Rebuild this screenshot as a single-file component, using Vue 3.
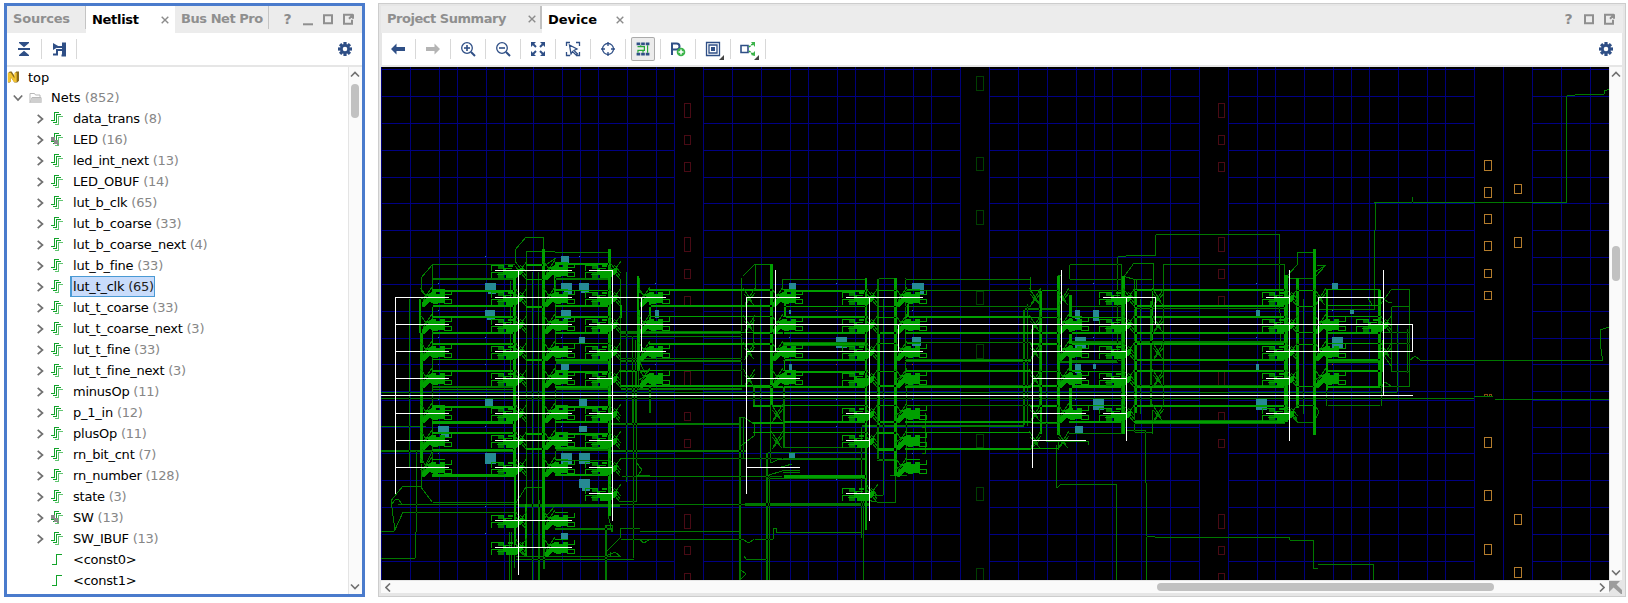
<script setup>
const nets = [
  ['data_trans', 8], ['LED', 16, 'port'], ['led_int_next', 13], ['LED_OBUF', 14], ['lut_b_clk', 65],
  ['lut_b_coarse', 33], ['lut_b_coarse_next', 4], ['lut_b_fine', 33], ['lut_t_clk', 65, 'sel'],
  ['lut_t_coarse', 33], ['lut_t_coarse_next', 3], ['lut_t_fine', 33], ['lut_t_fine_next', 3],
  ['minusOp', 11], ['p_1_in', 12], ['plusOp', 11], ['rn_bit_cnt', 7], ['rn_number', 128],
  ['state', 3], ['SW', 13, 'port'], ['SW_IBUF', 13], ['<const0>', 0, 'const'], ['<const1>', 0, 'const'],
]
const tools = ['back', 'forward', 'zoomin', 'zoomout', 'fit', 'select', 'target', 'routing', 'pblock', 'highlight', 'expand']

// straight segments: [x, y1, y2, width] and [y, x1, x2, width]
const vPath = l => l.map(([x, a, b, w = 1]) => `M${x},${a}h${w}V${b}h${-w}z`).join('')
const hPath = l => l.map(([y, a, b, w = 1]) => `M${a},${y}v${w}H${b}v${-w}z`).join('')
const boxes = l => l.map(([x, y, w, h]) => `M${x + 0.5},${y + 0.5}h${w}v${h}h${-w}z`).join('')

// clock-region tile grid
const gx = [381, 410, 439, 457, 486, 504, 533, 562, 580, 598, 627, 656, 674, 703, 732, 761, 790, 808, 837, 855, 884, 913, 931,
  960, 989, 1018, 1047, 1076, 1094, 1112, 1141, 1170, 1199, 1228, 1257, 1275, 1304, 1333, 1351, 1369, 1398, 1427, 1445, 1474, 1503, 1532, 1561, 1590]
const gy = [69, 96, 123, 150, 177, 203, 230, 257, 284, 311, 338, 364, 391, 400, 427, 453, 480, 507, 534, 561]
const spans = [[381, 674], [703, 960], [989, 1199], [1228, 1474], [1532, 1609]]
const gridV = vPath(gx.map(x => [x, 67, 580]))
const gridH = hPath(gy.flatMap(y => spans.map(([a, b]) => [y, a, b])))

const redRows = [[103, 14], [135, 9], [162, 9], [237, 14], [269, 9], [296, 9], [371, 14], [412, 8], [439, 8], [514, 14], [546, 8], [573, 9]]
const red = boxes([684, 1218].flatMap(x => redRows.map(([y, h]) => [x, y, 6, h])))
const dsp = boxes([[76, 14], [157, 13], [210, 14], [291, 13], [344, 14], [434, 13], [487, 13], [568, 13]].map(([y, h]) => [976, y, 7, h]))
const orange = boxes([
  ...[[160, 10], [187, 10], [214, 9], [241, 9], [269, 8], [291, 8], [437, 10], [490, 10], [544, 10]].map(([y, h]) => [1484, y, 7, h]),
  ...[[184, 9], [237, 10], [514, 10], [567, 10]].map(([y, h]) => [1514, y, 7, h]),
])
const teal = [
  [561, 256, 8, 8], [485, 283, 11, 8], [488, 290, 8, 4], [561, 283, 11, 7], [564, 290, 8, 4], [579, 283, 10, 7], [581, 290, 8, 3],
  [485, 310, 10, 7], [487, 317, 8, 3], [561, 310, 10, 7], [564, 317, 7, 2], [655, 310, 4, 8], [579, 337, 6, 6], [561, 364, 8, 6],
  [485, 399, 8, 7], [579, 399, 8, 7], [438, 426, 11, 7], [441, 433, 8, 4], [579, 426, 8, 6], [485, 453, 11, 11], [561, 453, 11, 11],
  [579, 453, 11, 11], [579, 479, 11, 9], [582, 488, 8, 3], [561, 533, 7, 6], [789, 283, 7, 6], [789, 310, 2, 4], [789, 364, 3, 6],
  [836, 337, 11, 11], [912, 283, 12, 8], [920, 291, 4, 3], [912, 337, 9, 9], [789, 453, 6, 5], [1075, 310, 5, 9], [1093, 310, 6, 11],
  [1075, 337, 11, 11], [1075, 364, 6, 9], [1093, 364, 3, 5], [1093, 399, 11, 11], [1075, 426, 8, 7], [1256, 310, 4, 6],
  [1256, 364, 3, 6], [1256, 399, 11, 11], [1332, 283, 6, 6], [1350, 310, 4, 4], [1332, 337, 11, 11],
]
const dots = [[485, 256], [579, 256], [438, 283], [655, 283], [438, 310], [438, 337], [485, 337], [561, 337], [438, 364], [485, 364],
  [655, 364], [438, 399], [485, 426], [561, 426], [438, 453], [485, 506], [561, 506], [485, 533], [836, 283], [912, 310], [789, 337],
  [836, 399], [912, 399], [836, 426], [912, 453], [836, 479], [1093, 283], [1093, 337], [1075, 399], [1256, 283], [1256, 337], [1332, 310]]
const hotDots = [[836, 310], [836, 364], [912, 364], [1332, 364]]

// slices: sites to the right (R) and to the left (L) of a switch column
const all = [270, 297, 324, 351, 378, 413, 440, 467]
const R = [[420, all.slice(1)], [543, [...all, 520, 547]], [638, [297, 324, 351, 378]], [771, [297, 324, 351, 378]],
  [895, [297, 324, 351, 378, 413, 440, 467]], [1057, [324, 351, 378, 413]], [1314, [324, 351, 378]]]
const L = [[515, [...all, 520, 547]], [609, [270, 297, 324, 351, 378, 413, 440, 467, 493]], [866, [297, 324, 351, 378, 413, 440, 493]],
  [1123, [297, 324, 351, 378, 413]], [1286, [297, 324, 351, 378, 413]], [1380, [324]]]
const fans = [[743, [297, 324, 351, 378]], [771, [413, 440]], [1029, [297, 324, 351, 378, 413, 440]], [1057, [297, 440]],
  [1152, [297, 324, 351, 378, 413]], [1314, [297]], [1380, [351]]]
const place = l => l.flatMap(([x, ys]) => ys.map(y => ({ x, y, t: `translate(${x} ${y})` })))
const rightSlices = place(R), leftSlices = place(L), loneFans = place(fans)

const darkV = [
  [409, 299, 468], [416, 451, 532], [415, 532, 558], [421, 277, 291], [432, 264, 290], [432, 313, 465], [526, 251, 270],
  [510, 281, 386], [526, 265, 557], [532, 272, 580], [538, 272, 557], [555, 276, 475], [509, 532, 580], [511, 532, 580], [514, 467, 568],
  [538, 500, 580, 2], [543, 467, 569, 2], [605, 525, 580, 2], [620, 279, 388], [626, 272, 482], [636, 370, 502], [632, 336, 424], [633, 390, 558],
  [635, 340, 424], [638, 276, 389], [649, 385, 413, 2], [741, 278, 385], [739, 417, 580, 2], [743, 417, 458], [755, 265, 290], [760, 299, 468],
  [753, 316, 350], [753, 386, 407, 2], [766, 452, 580, 2], [769, 474, 580], [770, 386, 463], [782, 279, 290], [783, 386, 447, 2],
  [861, 425, 538], [863, 498, 580], [877, 278, 460, 2], [883, 299, 496], [895, 459, 502], [905, 278, 386, 1], [906, 386, 467],
  [925, 413, 453], [1023, 308, 425, 2], [1027, 304, 426], [1039, 290, 406, 2], [1046, 325, 441], [1069, 264, 280], [1117, 256, 362],
  [1121, 264, 434], [1134, 279, 433], [1140, 299, 414], [1150, 301, 407, 2], [1163, 264, 406], [1145, 430, 483], [1146, 483, 580],
  [1056, 445, 488], [1116, 484, 580], [1155, 234, 256], [1279, 234, 313], [1280, 313, 341], [1284, 264, 277], [1303, 299, 414], [1313, 540, 568],
  [1373, 564, 580], [1375, 203, 230], [1374, 230, 309], [1397, 325, 393], [1407, 329, 373], [1409, 289, 387], [1391, 306, 372],
  [1326, 387, 406], [1381, 351, 406], [1566, 95, 203], [1412, 197, 203], [1289, 537, 541],
]
const brightV = [
  [419, 299, 333, 2], [420, 333, 463, 3], [513, 274, 475, 3], [514, 465, 545, 2], [542, 249, 476, 3], [542, 467, 547, 3], [554, 270, 294], [608, 249, 516, 3],
  [637, 276, 310, 2], [637, 310, 372, 3], [649, 300, 320, 2], [770, 264, 407, 3], [865, 278, 530, 2], [878, 332, 425, 2], [894, 278, 476, 3],
  [907, 304, 318, 2], [784, 304, 318, 2], [784, 358, 372], [1057, 276, 435, 3], [1069, 295, 415, 3], [1040, 290, 434, 2], [1122, 276, 434, 3],
  [1135, 290, 413, 2], [1152, 290, 340], [1284, 275, 422, 4], [1296, 278, 408, 3], [1313, 249, 435, 3], [1326, 289, 390, 2],
  [1378, 290, 386, 3], [1382, 340, 372], [432, 305, 344], [525, 504, 556, 2], [620, 305, 318, 2],
]
const bus = (a, b, ys) => ys.map(([y, w = 1]) => [y, a, b, w])
const darkH = [
  ...bus(433, 515, [[264], [278, 2], [386, 2], [389]]), ...bus(555, 609, [[252], [278, 2], [361, 3], [386, 4], [448, 3], [460]]),
  [392, 381, 1398], [398, 381, 1474], [396, 1474, 1493], [399, 1495, 1609], [426, 381, 426], [450, 381, 516, 2], [502, 433, 516],
  [504, 398, 518], [512, 403, 516], [531, 381, 394], [558, 381, 415],
  ...bus(621, 742, [[331, 3], [336], [358], [360, 2], [370], [388, 2]]), ...bus(610, 739, [[423, 2]]), ...bus(610, 747, [[450, 2]]),
  ...bus(622, 782, [[458], [476]]), ...bus(610, 745, [[504]]), [501, 620, 637], [504, 518, 620, 3], [528, 555, 612, 2], [528, 620, 640], [531, 640, 739],
  [539, 621, 744], [556, 516, 620], [559, 516, 634], [559, 746, 767], [539, 755, 773], [532, 776, 861], [503, 745, 869, 3],
  ...bus(783, 866, [[279], [342, 4], [360], [386], [447], [458, 2]]), [452, 766, 866], [478, 768, 866], [425, 861, 1024, 2],
  ...bus(905, 1031, [[279], [290], [306], [342], [359, 3], [385, 3], [405]]), [278, 877, 896], [459, 877, 896, 2], [475, 890, 907], [502, 877, 896], [495, 873, 884],
  ...bus(1069, 1121, [[264], [279], [290], [306], [341, 2], [360], [433]]), [308, 1023, 1058, 2], [422, 1033, 1058, 2],
  [361, 1060, 1118, 2], [484, 1061, 1116], [256, 1117, 1126], [255, 1126, 1155], [234, 1155, 1279],
  ...bus(1134, 1152, [[279], [432]]), [263, 1134, 1152], [264, 1164, 1284], [430, 1127, 1145], [537, 1155, 1289], [536, 1146, 1155], [540, 1289, 1313], [568, 1313, 1318], [564, 1318, 1373],
  ...bus(1134, 1285, [[308], [341, 2], [359], [385, 3], [420, 4]]), [252, 1297, 1314], [278, 1290, 1314], [422, 1297, 1315],
  ...bus(1328, 1380, [[360, 3], [405]]), [309, 1318, 1375], [289, 1391, 1409], [306, 1391, 1409], [332, 1382, 1409], [343, 1382, 1410],
  [371, 1391, 1409], [386, 1382, 1409], [360, 1420, 1603], [202, 1374, 1566], [95, 1566, 1575], [94, 1575, 1604],
]
const brightH = [
  ...bus(432, 514, [[290, 2], [305, 2], [316, 2], [332, 2], [343, 2], [359], [370, 2], [406, 2], [421, 3], [432, 2], [449, 2], [474, 3]]),
  ...bus(526, 543, [[264, 2], [279], [306, 2], [359, 2], [433, 2], [448, 2]]),
  ...bus(555, 609, [[263, 2], [290], [305, 2], [316, 2], [332, 2], [343], [359, 2], [371, 2], [386, 2], [406, 2], [421, 2], [433, 2], [447, 2], [474, 2]]),
  ...bus(649, 772, [[289, 2], [305, 2], [316], [332], [343, 2]]), [385, 621, 772, 2], [371, 620, 649],
  ...bus(753, 783, [[332, 2], [386, 2], [405, 2], [422, 2], [432]]),
  ...bus(784, 866, [[290, 2], [306], [316, 2], [332, 2], [343, 2], [359, 2], [371, 2], [386, 2], [405], [421, 2], [432], [475, 3]]),
  ...bus(878, 896, [[290], [306], [317], [332, 2], [343], [371], [385, 2], [405], [421, 2], [432, 2], [448, 3]]),
  ...bus(905, 1031, [[316, 2], [332, 2], [360], [370, 2], [386, 2], [421, 2], [432], [448, 2]]),
  ...bus(1031, 1058, [[290], [317], [332, 2], [343, 2], [371], [385, 2], [405, 2], [422], [448]]),
  ...bus(1069, 1121, [[317], [332, 2], [343, 2], [371], [385, 3], [405], [421, 2]]),
  ...bus(1134, 1285, [[289, 2], [305, 2], [316, 2], [332, 2], [343, 2], [359, 2], [370, 2], [386, 2], [405, 2], [421, 2]]),
  ...bus(1297, 1314, [[290], [306], [332], [344], [386], [405]]),
  ...bus(1328, 1380, [[289], [305], [316], [332, 2], [343], [359, 2], [370, 2], [386, 2]]),
]
// routes with bends
const bends = [
  'M421,278L432,265', 'M421,291L428,298', 'M515,262V250L526,237H543V262', 'M526,251H549L555,252', 'M609,249V264',
  'M421,464V487M421,487L432,502M432,452L421,474M403,486H421',
  'M391.500,504V500L403,486M391.500,504L394.500,527V531L403,512M392,504L395,500L398,499L402,504',
  'M514,506L526,487H544M543,520L555,506', 'M514,547L525,556H544L555,547', 'M544,252V266L556,258',
  'M608,514L612,532V525H605M606,552L620,538V528M606,556L615,552L621,557M610,557V552',
  'M636,462L642,470L636,478V502M637,475H648L650,476H740M620,458H636M640,540L644,543L650,539',
  'M639,278V292L649,298M638,358L649,382', 'M743,276L755,264H771V278', 'M739,417L745,418L754,424M739,447L754,436V424',
  'M742,539L749,543L754,539M744,556L746,559M741,570L746,574L741,579M773,539V528H776V532',
  'M771,463L779,459H790M778,468L792,464M766,476L785,470H800M783,473L800,472', 'M868,488L877,496M866,500L877,502',
  'M1030,277V290L1040,304M1058,276L1061,275', 'M1123,278L1134,263H1153V290M1123,276L1136,280V290',
  'M1152,410V434M1058,440V450M1030,450L1040,440M1057,488L1061,484', 'M1286,277L1297,265V252H1315M1297,278H1290L1286,275',
  'M1315,277L1326,265M1317,265H1326L1315,272', 'M1315,405L1319,412L1315,420M1285,405L1298,422', 'M1380,305L1391,290M1380,297L1388,302H1392M1368,298L1372,305H1380',
  'M1380,350L1391,366V372M1380,388L1385,382L1391,386', 'M1409,361L1415,356L1420,360M1602.500,360L1600.500,345V330L1609,327', 'M1604.500,94V91L1609,89',
  'M925,413V427H922M925,427V453H922', 'M514,548L526,541M503,548L515,555', 'M1046,441H1088V445',
]
const clkV = vPath([[395, 297, 494], [518, 270, 575], [612, 270, 521], [641, 297, 351], [746, 297, 494], [775, 270, 351], [869, 297, 521],
  [898, 324, 351], [1032, 324, 468], [1061, 270, 351], [1126, 297, 441], [1155, 297, 324], [1289, 270, 441], [1318, 297, 351], [1383, 270, 395], [1412, 324, 351]])
const clkH = hPath([
  ...all.slice(1).map(y => [y, 395, 449]), ...[...all, 520, 547].map(y => [y, 495, 572]),
  ...[270, 378, 413, 440, 467, 493].map(y => [y, 589, 612]), [297, 589, 666], [351, 589, 666], [324, 589, 1413], [395, 381, 1413],
  [297, 746, 800], [351, 746, 923], [378, 746, 800], [467, 746, 800], [297, 846, 923], [413, 846, 869], [440, 846, 869], [493, 846, 869],
  [297, 1103, 1156], [351, 1032, 1127], [378, 1032, 1086], [378, 1103, 1127], [413, 1032, 1086], [413, 1103, 1127], [440, 1032, 1086],
  [297, 1266, 1290], [297, 1318, 1384], [351, 1266, 1413], [378, 1266, 1290], [413, 1266, 1290],
])
const darkPath = vPath(darkV) + hPath(darkH)
const brightPath = vPath(brightV) + hPath(brightH)
const bendPath = bends.join('')
</script>

<template>
  <div class="app">
    <section class="netlist">
      <header class="tabs">
        <div class="tab t-src">Sources</div>
        <div class="tab on t-net">Netlist<svg class="x" viewBox="0 0 8 8"><path d="M.7.7l6.6 6.6M7.3.7L.7 7.3" /></svg></div>
        <div class="tab t-bus">Bus Net Pro</div>
        <svg class="win" width="73" height="14" viewBox="0 0 73 14">
          <text x="0.500" y="11.3">?</text>
          <path d="M20 11.300h10" /><path d="M41 2.200h8v8h-8z" />
          <path d="M66 2h-5v9h8V7M66 6l3-3M66 2h4M70 1.500V6" transform="translate(0 -.3)" />
        </svg>
      </header>
      <div class="toolbar">
        <div class="cell"><svg width="14" height="16" viewBox="0 0 14 16"><path class="nf" d="M2 1h10v1L7 6.300L2 2zM2 15h10v-1L7 9.700L2 14z" /><path class="nf" d="M1 7h12v2H1z" /></svg></div>
        <div class="cell"><svg width="15" height="15" viewBox="0 0 15 15"><path class="nf" d="M1 1l6 3.500L1 8z" /><path class="n2" d="M5 5h5M10 1.500h3v12h-3.500M11 1v13M11 8H5v4.500H1" /></svg></div>
        <svg class="gear" width="16" height="16" viewBox="-8 -8 16 16"><g class="nf"><rect v-for="a in 4" :key="a" x="-1.6" y="-7" width="3.200" height="14" :transform="`rotate(${a * 45})`" /></g><circle class="gr" r="3.900" /></svg>
      </div>
      <div class="body">
        <div class="tree">
          <div class="row root"><svg class="nicon" width="12" height="14" viewBox="0 0 13 14"><path d="M1 13V3l2-2h2l4 6V2l1-1h3v10l-2 2H8L4 7v5l-1 1z" class="gold2" /><path d="M1 12.500V2.500h3l4 6v-6h2.500v10h-3L4 7v5.500z" class="gold" /></svg><span>top</span></div>
          <div class="row nets">
            <svg class="down" width="10" height="8" viewBox="0 0 10 8"><path d="M.8 1.500L5 6l4.200-4.500" /></svg>
            <svg class="folder" width="13" height="12" viewBox="0 0 13 12"><path d="M1 11V1.500h4.500L6.500 3H11v2M1.200 10.500L3 5.500h9v5z" /><path class="ff" d="M3 6h9.500v5H1z" /></svg>
            <span>Nets <i>(852)</i></span>
          </div>
          <div v-for="n in nets" :key="n[0]" class="row net">
            <svg class="chev" width="8" height="10" viewBox="0 0 8 10"><path v-if="n[2] !== 'const'" d="M1.700 .8L6.500 5L1.700 9.200" /></svg>
            <svg class="wave" width="13" height="13" viewBox="0 0 13 13" shape-rendering="crispEdges">
              <path v-if="n[2] === 'const'" class="g1" d="M1 11.500h4.500V1.500H11" />
              <template v-else>
                <path class="g2" d="M4 12.500h3.500V4.500H12" />
                <path class="g1" d="M0 8.500h3.500V.5H8" /><path class="g1" d="M2 10.500h3.500V2.500h4.500" />
                <path v-if="n[2] === 'port'" class="pt" d="M0 4h4v4H0zM3 7h4v4H3zM6 10h2v2H6z" />
              </template>
            </svg>
            <span :class="{ sel: n[2] === 'sel' }">{{ n[0] }}<i v-if="n[1]"> ({{ n[1] }})</i></span>
          </div>
        </div>
        <div class="vbar"><svg width="10" height="7" viewBox="0 0 10 7"><path d="M1 5.500L5 1.500l4 4" /></svg><div class="thumb a"></div><svg width="10" height="7" viewBox="0 0 10 7"><path d="M1 1.500l4 4 4-4" /></svg></div>
      </div>
    </section>

    <section class="device">
      <header class="tabs">
        <div class="tab t-sum"><span>Project Summary</span><svg class="x" viewBox="0 0 8 8"><path d="M.7.7l6.6 6.6M7.3.7L.7 7.3" /></svg></div>
        <div class="tab on t-dev">Device<svg class="x" viewBox="0 0 8 8"><path d="M.7.7l6.6 6.6M7.3.7L.7 7.3" /></svg></div>
        <svg class="win" width="53" height="14" viewBox="0 0 53 14">
          <text x="0.500" y="11.3">?</text><path d="M21 2.200h8v8h-8z" />
          <path d="M46 2h-5v9h8V7M46 6l3-3M46 2h4M50 1.500V6" transform="translate(0 -.3)" />
        </svg>
      </header>
      <div class="toolbar">
        <div v-for="t in tools" :key="t" class="cell" :class="{ pressed: t === 'routing' }">
          <svg width="24" height="24" viewBox="-12 -12 24 24">
            <path v-if="t === 'back'" class="nf" d="M-7 0l5.500-5.500V-2H7v4h-8.500v3.500z" />
            <path v-if="t === 'forward'" class="gf" d="M7 0L1.500-5.500V-2H-7v4h8.500v3.500z" />
            <g v-if="t === 'zoomin' || t === 'zoomout'"><circle class="n1" cx="-1" cy="-1" r="5.300" /><path class="n2" d="M3 3l4 4" /><path class="n15" d="M-4-1h6" /><path v-if="t === 'zoomin'" class="n15" d="M-1-4v6" /></g>
            <g v-if="t === 'fit'"><path class="nf" d="M-7-7h5l-5 5zM7-7v5l-5-5zM7 7H2l5-5zM-7 7V2l5 5z" /><path class="n2" d="M-6-6l4 4M6-6l-4 4M6 6L2 2M-6 6l4-4" /></g>
            <g v-if="t === 'select'"><path class="n1" d="M-6.500-3v-3.500H-3M3-6.500h3.500V-3M6.500 3v3.500H3M-3 6.500h-3.500V3" /><path class="n1" d="M-3.500-4L4 0 1 1.500 4.500 5 3 6-.5 2.500-2 5z" /></g>
            <g v-if="t === 'target'"><circle class="n1" r="5.500" /><path class="n1" d="M0-7v4M0 3v4M-7 0h4M3 0h4" /></g>
            <g v-if="t === 'routing'"><path class="nf" d="M-7-7h4v3h-4zM-2-7h4v3h-4zM3-7h4v3H3zM-7 4h4v3h-4zM-2 4h4v3h-4zM3 4h4v3H3z" /><path class="g gthin" d="M-6-2.500H1.500V1.500H-5.500V4M0 1.500V4M5-4V4M-2.500-4v1.500" /></g>
            <g v-if="t === 'pblock'"><path class="n2" d="M-6 6V-5.500h4.500a3 3 0 010 6H-6" /><circle class="gc" cx="3" cy="3" r="4.300" /><path class="w2" d="M.5 3h5M3 .5v5" /></g>
            <g v-if="t === 'highlight'"><path class="n1" d="M-6.500-6.500h13v13h-13zM-4-4h8v8h-8z" /><path class="nf" d="M-2-2h4v4h-4z" /><path class="cn" d="M11 6v5H6z" /></g>
            <g v-if="t === 'expand'"><path class="n1 thick" d="M-7-3.500h7v7h-7z" /><path class="g dash" d="M1-2l5-4M1 2l5 4" /><path class="gfl" d="M7-7v5L3-7zM7 7V2L3 6z" /><path class="cn" d="M11 6v5H6z" /></g>
          </svg>
        </div>
        <svg class="gear" width="16" height="16" viewBox="-8 -8 16 16"><g class="nf"><rect v-for="a in 4" :key="a" x="-1.6" y="-7" width="3.200" height="14" :transform="`rotate(${a * 45})`" /></g><circle class="gr" r="3.900" /></svg>
      </div>
      <div class="view">
        <svg class="canvas" width="1228" height="513" viewBox="381 67 1228 513" shape-rendering="crispEdges">
          <defs>
            <g id="fan"><path class="dk" d="M.5-8.500L9.500 5.500M12-9L2 7M1 9L12-4M1-3L11 8" /></g>
            <g id="siteR">
              <path class="dk" d="M.5-9L9 3M12-10L3 4M2 10L13-4M9-4l6 5M0 3l8-6" />
              <path class="bf" d="M2 9V5L8 0L6-3H10V-1H25V6H12L9 5L4 10zM11-5H16V-3H20V-5H25V0H9zM13 1h5v6h-5z" />
              <path class="br" d="M12-7.500H24.500M31.500-7V-2.500H25M25 2.500h6.500v4H24" />
            </g>
            <g id="siteL">
              <path class="dk" d="M12-9L2 5M0-9L11 6M11 9L0-4M5-5l7 8" />
              <path class="df" d="M-17-4h6v3h-6zM-17 2h6v6h-6z" />
              <path class="bf" d="M-12-2H-9V0H2L8-3V3L1 8H-9V5H-12zM-7-5H-2V-3H-7z" />
              <path class="br" d="M-23.500 1V-4.500H-12V-2H-3M-23.500 8V2.500H-11M-18 4.500H-8" />
            </g>
          </defs>
          <path class="gridv" :d="gridV" /><path class="gridh" :d="gridH" />
          <path class="redb" :d="red" /><path class="dspb" :d="dsp" /><path class="orb" :d="orange" />
          <path class="brn" d="M1484.500 396v-1.500h3v1.500M1489.500 396v-1.500h2v1.500" />
          <rect v-for="(r, i) in teal" :key="'t' + i" class="teal" :x="r[0]" :y="r[1]" :width="r[2]" :height="r[3]" />
          <rect v-for="(r, i) in dots" :key="'d' + i" class="teal" :x="r[0]" :y="r[1]" width="1" height="1" />
          <rect v-for="(r, i) in hotDots" :key="'h' + i" class="hot" :x="r[0]" :y="r[1]" width="1" height="1" />
          <path class="df" :d="darkPath" />
          <path class="dk" :d="bendPath" />
          <path class="bf" :d="brightPath" />
          <use v-for="(s, i) in loneFans" :key="'f' + i" href="#fan" :transform="s.t" />
          <use v-for="(s, i) in rightSlices" :key="'r' + i" href="#siteR" :transform="s.t" />
          <use v-for="(s, i) in leftSlices" :key="'l' + i" href="#siteL" :transform="s.t" />
          <path class="clk" :d="clkV" /><path class="clk" :d="clkH" />
        </svg>
        <div class="vbar"><svg width="10" height="7" viewBox="0 0 10 7"><path d="M1 5.500L5 1.500l4 4" /></svg><div class="thumb b"></div><svg width="10" height="7" viewBox="0 0 10 7"><path d="M1 1.500l4 4 4-4" /></svg></div>
      </div>
      <div class="hbar">
        <svg class="la" width="6" height="9" viewBox="0 0 6 9"><path d="M5 .5l-4 4 4 4" /></svg>
        <div class="hthumb"></div>
        <svg class="ra" width="6" height="9" viewBox="0 0 6 9"><path d="M1 .5l4 4-4 4" /></svg>
        <svg class="corner" width="13" height="13" viewBox="0 0 13 13"><path d="M0 0h11L7.500 3.500 13 9v4h-1L4.500 6.500 0 11z" /></svg>
      </div>
    </section>
  </div>
</template>

<style>
body { background: #fff; overflow: hidden; }
</style>
<style scoped>
.app { display: flex; gap: 13px; padding: 3px 0 0 4px; height: 603px; box-sizing: border-box; font-family: "DejaVu Sans", sans-serif; font-size: 13px; color: #000; }
section { box-sizing: border-box; height: 594px; display: flex; flex-direction: column; background: #fff; }
.netlist { width: 361px; border: 3px solid #4a7bcc; }
.device { width: 1248px; border: 1px solid #cdcdcd; box-shadow: inset 0 0 0 3px #e6e6e6; padding: 2px; }
.tabs { display: flex; height: 27px; background: #ececec; position: relative; flex: none; }
.tab { box-sizing: border-box; font-weight: bold; font-size: 13px; line-height: 25px; letter-spacing: -0.2px; color: #8f8f8f; white-space: nowrap; display: flex; align-items: center; justify-content: space-between; }
.tab.on { background: #fff; color: #000; }
.t-src { width: 79px; padding-left: 6px; border-right: 1px solid #c4c4c4; height: 23px; }
.t-net { width: 89px; padding: 0 6px 0 6px; letter-spacing: -0.3px; }
.t-bus { width: 94px; padding-left: 6px; border-right: 1px solid #c4c4c4; height: 23px; letter-spacing: -0.45px; }
.t-src, .t-bus, .t-sum { line-height: 25px; padding-top: 2px; }
.t-sum { width: 161px; padding: 2px 4px 0 6px; border-right: 2px solid #c0c0c0; height: 23px; letter-spacing: -0.47px; }
.t-dev { width: 88px; padding: 0 6px; letter-spacing: 0; }
.x { width: 8px; height: 8px; fill: none; stroke: #8c8c8c; stroke-width: 1.400; margin-top: 1px; }
.win { margin-left: auto; align-self: center; margin-right: 6px; fill: none; stroke: #8f8f8f; stroke-width: 2; }
.win text { fill: #8c8c8c; stroke: none; font: bold 14px "DejaVu Sans", sans-serif; }
.toolbar { height: 32px; flex: none; display: flex; align-items: center; border-bottom: 2px solid #e6e6e6; }
.cell { width: 35px; height: 20px; box-sizing: border-box; border-right: 1px solid #d8d8d8; display: flex; align-items: center; justify-content: center; }
.cell.pressed svg { background: #ececec; box-shadow: 0 0 0 1px #ababab; width: 22px; height: 22px; border-radius: 1px; }
.gear { margin-left: auto; margin-right: 9px; }
.gr { fill: #fff; stroke: #2f4f86; stroke-width: 2.600; r: 3.600px; }
.nf { fill: #2f4f86; } .gf { fill: #b4b4b4; } .gfl { fill: #3cb44a; } .gc { fill: #3cb44a; } .cn { fill: #444; }
.n1, .n2, .n15, .g, .w2 { fill: none; stroke: #2f4f86; stroke-width: 1.300; }
.n2 { stroke-width: 2; } .n15, .n1.thick { stroke-width: 1.600; } .g { stroke: #28a838; stroke-width: 1.500; } .w2 { stroke: #fff; stroke-width: 1.500; }
.g.gthin { stroke-width: 1.300; }
.dash { stroke-dasharray: 2 1; }
.body { flex: 1; min-height: 0; display: flex; }
.tree { flex: 1; overflow: hidden; }
.row { height: 21px; display: flex; align-items: center; white-space: pre; line-height: 19px; letter-spacing: -0.23px; }
.row.root { height: 20px; letter-spacing: 0; }
.root span { margin-left: 9px; }
.nicon { align-self: center; }
.gold { fill: #f2c230; } .gold2 { fill: #8a6a1c; }
.row i { font-style: normal; color: #868686; }
.nets { letter-spacing: 0; }
.down { margin-left: 6px; } .folder { margin-left: 6px; }
.down path, .chev path { fill: none; stroke: #707070; stroke-width: 1.700; }
.folder path { fill: none; stroke: #b9b9b9; } .folder .ff { fill: #cfcfcf; stroke: none; }
.nets span { margin-left: 9px; }
.chev { margin-left: 29px; }
.wave { margin-left: 7px; }
.g1, .g2 { fill: none; stroke: #12a32a; } .g2 { stroke: #63c673; }
.pt { fill: #8b8b8b; }
.net span { margin-left: 7px; padding: 0 1px 0 2px; }
.net span.sel { margin-left: 6px; box-sizing: border-box; height: 21px; background: #c9dcfb; border: 1px solid #4a9ad4; border-left-width: 2px; padding: 0 0 0 1px; }
.sel i { color: #222; }
.vbar { width: 13px; flex: none; box-sizing: border-box; border-left: 1px solid #e4e4e4; background: #fafafa; display: flex; flex-direction: column; align-items: center; padding: 4px 0; }
.netlist .vbar { width: 14px; padding-right: 1px; }
.vbar path, .hbar .la path, .hbar .ra path { fill: none; stroke: #707070; stroke-width: 1.600; }
.thumb { width: 8px; border-radius: 4px; background: #c1c1c1; }
.thumb.a { height: 34px; margin: 6px 0 auto; }
.thumb.b { height: 35px; margin: 168px 0 auto; }
.view { display: flex; height: 513px; flex: none; }
.canvas { display: block; background: #000; }
.device .toolbar { width: 1242px; }
.hbar { height: 13px; display: flex; align-items: center; background: #fafafa; border-top: 1px solid #e6e6e6; box-sizing: border-box; width: 1241px; }
.la { margin-left: 4px; }
.hthumb { width: 337px; height: 8px; border-radius: 4px; background: #c1c1c1; margin-left: 766px; }
.ra { margin-left: auto; margin-right: 4px; }
.corner { fill: #9c9c9c; background: #e6e6e6; }
.gridv { fill: #00007a; } .gridh { fill: #000084; }
.redb, .dspb, .orb, .brn { fill: none; stroke: #490a14; } .dspb { stroke: #003f00; } .orb { stroke: #b47c2c; } .brn { stroke: #8a4a10; }
.teal { fill: #268a94; } .hot { fill: #b84a10; }
.df { fill: #007800; } .bf { fill: #00a000; }
.dk, .br { fill: none; stroke: #008000; } .br { stroke: #00a000; }
.clk { fill: #fff; }
</style>
